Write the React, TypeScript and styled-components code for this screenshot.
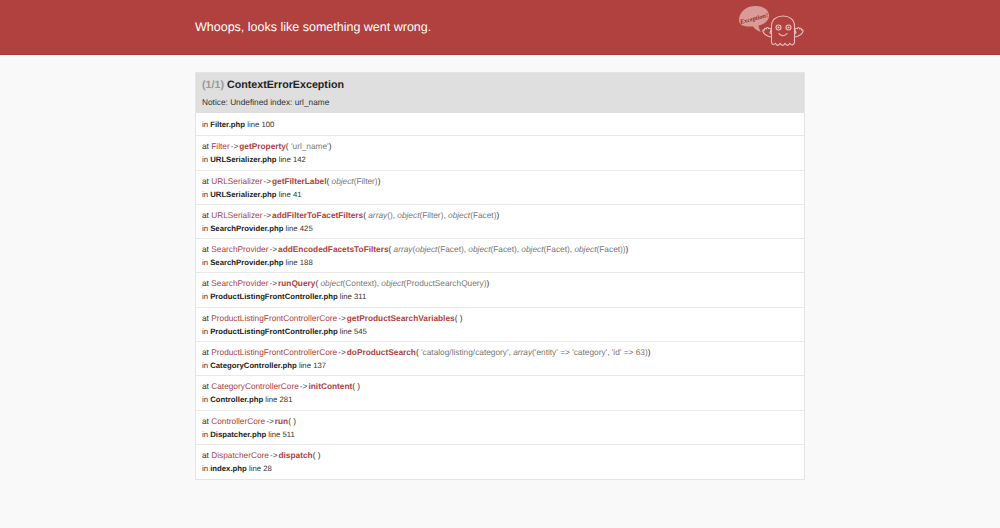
import { ReactNode } from "react";
import styled, { createGlobalStyle } from "styled-components";

const GlobalStyle = createGlobalStyle`
  html, body {
    margin: 0;
    padding: 0;
    background: #f9f9f9;
    font-family: "Liberation Sans", Arial, sans-serif;
    color: #333;
    text-rendering: geometricPrecision;
  }
`;

const Header = styled.header`
  height: 54.5px;
  background: #b0413e;
  border-bottom: 0.5px solid #a33a37;
  box-sizing: border-box;
`;

const HeaderInner = styled.div`
  width: 610px;
  height: 100%;
  margin: 0 auto;
  display: flex;
  justify-content: space-between;
  align-items: center;
  box-sizing: border-box;
`;

const Headline = styled.h1`
  margin: 0;
  color: #fff;
  font-size: 12.5px;
  font-weight: 400;
`;

const Main = styled.main`
  width: 610px;
  margin: 17.5px auto 0;
`;

const Block = styled.section`
  background: #fff;
  border: 1px solid #e4e4e4;
  box-sizing: border-box;
`;

const ErrorHead = styled.div`
  height: 40px;
  box-sizing: border-box;
  padding: 5px 6px 0;
  background: #dfdfdf;
`;

const ErrorTitle = styled.h2`
  margin: 0;
  font-size: 10.7px;
  line-height: 14px;
  font-weight: 700;
  color: #222;
`;

const Counter = styled.span`
  color: #999;
  font-weight: 700;
`;

const ErrorMessage = styled.p`
  margin: 4px 0 0;
  font-size: 8.3px;
  line-height: 13px;
  color: #333;
`;

const Trace = styled.div`
  display: flex;
  flex-direction: column;
`;

const TraceRow = styled.div<{ $first?: boolean }>`
  height: ${(props) => (props.$first ? "23.3px" : "34.3px")};
  box-sizing: border-box;
  padding: ${(props) => (props.$first ? "5px" : "4px")} 6px 0;
  border-bottom: 1px solid #e9e9e9;
  &:last-child {
    border-bottom: 0;
  }
`;

const CallLine = styled.div`
  font-size: 8.3px;
  line-height: 13px;
  white-space: nowrap;
  color: #333;
`;

const FileLine = styled.div`
  font-size: 7.75px;
  line-height: 13px;
  white-space: nowrap;
  color: #333;
`;

const ClassName = styled.span`
  color: #b0413e;
`;

const Arrow = styled.span`
  color: #555;
  margin: 0 1px;
`;

const Method = styled.strong`
  color: #b0413e;
  font-weight: 700;
`;

const Paren = styled.span`
  color: #333;
`;

const Arg = styled.span`
  color: #777;
  em {
    font-style: italic;
  }
`;

const FileName = styled.strong`
  color: #222;
  font-weight: 700;
`;

interface Frame {
  cls?: string;
  method?: string;
  args?: ReactNode;
  file: string;
  line: number;
}

const frames: Frame[] = [
  { file: "Filter.php", line: 100 },
  {
    cls: "Filter",
    method: "getProperty",
    args: <Arg>'url_name'</Arg>,
    file: "URLSerializer.php",
    line: 142,
  },
  {
    cls: "URLSerializer",
    method: "getFilterLabel",
    args: (
      <Arg>
        <em>object</em>(Filter)
      </Arg>
    ),
    file: "URLSerializer.php",
    line: 41,
  },
  {
    cls: "URLSerializer",
    method: "addFilterToFacetFilters",
    args: (
      <Arg>
        <em>array</em>(), <em>object</em>(Filter), <em>object</em>(Facet)
      </Arg>
    ),
    file: "SearchProvider.php",
    line: 425,
  },
  {
    cls: "SearchProvider",
    method: "addEncodedFacetsToFilters",
    args: (
      <Arg>
        <em>array</em>(<em>object</em>(Facet), <em>object</em>(Facet), <em>object</em>(Facet),{" "}
        <em>object</em>(Facet))
      </Arg>
    ),
    file: "SearchProvider.php",
    line: 188,
  },
  {
    cls: "SearchProvider",
    method: "runQuery",
    args: (
      <Arg>
        <em>object</em>(Context), <em>object</em>(ProductSearchQuery)
      </Arg>
    ),
    file: "ProductListingFrontController.php",
    line: 311,
  },
  {
    cls: "ProductListingFrontControllerCore",
    method: "getProductSearchVariables",
    file: "ProductListingFrontController.php",
    line: 545,
  },
  {
    cls: "ProductListingFrontControllerCore",
    method: "doProductSearch",
    args: (
      <Arg>
        'catalog/listing/category', <em>array</em>('entity' =&gt; 'category', 'id' =&gt; 63)
      </Arg>
    ),
    file: "CategoryController.php",
    line: 137,
  },
  {
    cls: "CategoryControllerCore",
    method: "initContent",
    file: "Controller.php",
    line: 281,
  },
  { cls: "ControllerCore", method: "run", file: "Dispatcher.php", line: 511 },
  { cls: "DispatcherCore", method: "dispatch", file: "index.php", line: 28 },
];

// viewBox uses page coordinates so the shapes can be read off the screenshot
function GhostLogo() {
  return (
    <svg width="67" height="42" viewBox="738.5 7 67 42" fill="none">
      <path
        d="M739.5 21c0-7.5 6.5-13.5 15-14 8.5-.5 15 3.5 15 9.5 0 5.5-5 9-10.5 10 .3 2.5 1.300 4.5 2.5 6.5-3.5-1-6.5-3-8-5.5-8 .5-14-.5-14-6.5Z"
        fill="#d99a98"
      />
      <text
        x="754.5"
        y="21.5"
        textAnchor="middle"
        fontFamily="'Liberation Serif', serif"
        fontStyle="italic"
        fontWeight="700"
        fontSize="6.4"
        fill="#8a2c2a"
        transform="rotate(-14 754.5 19)"
      >
        Exception!
      </text>
      <g stroke="#e8bfbe" strokeWidth="1.1" strokeLinecap="round" strokeLinejoin="round">
        <path d="M772 43.5V27c0-6.5 5-10 11.5-10S795 20.5 795 27v16.5c-1.2 3-3.200 3-4.700.8-1.300 2.800-3.500 2.800-4.800 0-1.300 2.800-3.500 2.800-4.800 0-1.300 2.800-3.500 2.800-4.800 0-1.300 1.800-2.900 1.800-3.900-.8Z" />
        <path d="M772 38c-3.500-.2-7.500-2.500-8.500-5.500-.5-1.500.6-2.200 1.600-1.300-.6-1.800 1-2.500 1.800-1.200-.2-1.700 1.800-2 2.200-.4 1.500-1 3 .2 2.300 2l-1 2.200 1.600 1.200" />
        <path d="M795 38c3.500-.2 7.500-2.500 8.500-5.500.5-1.500-.6-2.200-1.600-1.300.6-1.800-1-2.500-1.800-1.200.2-1.700-1.800-2-2.200-.4-1.500-1-3 .2-2.300 2l1 2.200-1.600 1.200" />
        <path d="M779.5 34.5c1.200 2.800 6.300 2.800 8 0" />
        <circle cx="779" cy="28.5" r="2.500" />
        <circle cx="789" cy="28.5" r="2.500" />
      </g>
      <circle cx="779" cy="28.5" r="1.100" fill="#e8bfbe" />
      <circle cx="789" cy="28.5" r="1.100" fill="#e8bfbe" />
    </svg>
  );
}

export default function App() {
  return (
    <>
      <GlobalStyle />
      <Header>
        <HeaderInner>
          <Headline>Whoops, looks like something went wrong.</Headline>
          <GhostLogo />
        </HeaderInner>
      </Header>
      <Main>
        <Block>
          <ErrorHead>
            <ErrorTitle>
              <Counter>(1/1)</Counter> ContextErrorException
            </ErrorTitle>
            <ErrorMessage>Notice: Undefined index: url_name</ErrorMessage>
          </ErrorHead>
          <Trace>
            {frames.map((frame, i) => (
              <TraceRow key={i} $first={i === 0}>
                {frame.cls && (
                  <CallLine>
                    at <ClassName>{frame.cls}</ClassName>
                    <Arrow>-&gt;</Arrow>
                    <Method>{frame.method}</Method>
                    <Paren>( </Paren>
                    {frame.args}
                    <Paren>{frame.args ? ")" : " )"}</Paren>
                  </CallLine>
                )}
                <FileLine>
                  in <FileName>{frame.file}</FileName> line {frame.line}
                </FileLine>
              </TraceRow>
            ))}
          </Trace>
        </Block>
      </Main>
    </>
  );
}
